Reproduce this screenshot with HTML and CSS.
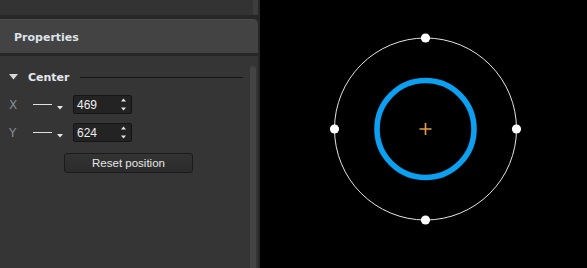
FILE: index.html
```html
<!DOCTYPE html>
<html>
<head>
<meta charset="utf-8">
<link rel="stylesheet" href="styles.css">
</head>
<body>
<div class="app">
  <aside class="sidebar">
    <div class="top-panel">
      <div class="top-fill"></div>
      <div class="top-thumb"></div>
    </div>
    <div class="panel-header">Properties</div>
    <div class="panel-body">
      <div class="panel-main">
        <div class="section-head">
          <svg class="caret" width="9" height="6" viewBox="0 0 9 6"><path d="M0 0H9L4.5 5.5Z" fill="#d6d6d6"/></svg>
          <span class="section-title">Center</span>
          <span class="section-rule"></span>
        </div>
        <div class="field-row">
          <span class="axis">X</span>
          <span class="curve-pick">
            <span class="curve-line"></span>
            <svg class="mini-caret" width="6" height="4" viewBox="0 0 6 4"><path d="M0 0H6L3 3.5Z" fill="#e6e6e6"/></svg>
          </span>
          <div class="spin">
            <span class="spin-value">469</span>
            <span class="spin-arrows">
              <svg width="5" height="13" viewBox="0 0 5 13"><path d="M0 3.5H5L2.5 0.5Z M0 9.5H5L2.5 12.5Z" fill="#e6e6e6"/></svg>
            </span>
          </div>
        </div>
        <div class="field-row second">
          <span class="axis">Y</span>
          <span class="curve-pick">
            <span class="curve-line"></span>
            <svg class="mini-caret" width="6" height="4" viewBox="0 0 6 4"><path d="M0 0H6L3 3.5Z" fill="#e6e6e6"/></svg>
          </span>
          <div class="spin">
            <span class="spin-value">624</span>
            <span class="spin-arrows">
              <svg width="5" height="13" viewBox="0 0 5 13"><path d="M0 3.5H5L2.5 0.5Z M0 9.5H5L2.5 12.5Z" fill="#e6e6e6"/></svg>
            </span>
          </div>
        </div>
        <button class="reset-btn">Reset position</button>
      </div>
      <div class="scroll-track"><div class="scroll-thumb"></div></div>
    </div>
  </aside>
  <main class="canvas">
    <svg width="327" height="268" viewBox="0 0 327 268">
      <defs>
        <filter id="soft" x="-20%" y="-20%" width="140%" height="140%">
          <feGaussianBlur stdDeviation="0.7"/>
        </filter>
      </defs>
      <circle cx="165.5" cy="129" r="91" fill="none" stroke="#e4e4e4" stroke-width="1"/>
      <circle cx="165.5" cy="129" r="48.5" fill="none" stroke="#079ff0" stroke-width="5.6" filter="url(#soft)"/>
      <path d="M159.5 129H171.5M165.5 123V135" stroke="#e59f45" stroke-width="1.6"/>
      <circle cx="165.5" cy="38" r="4.6" fill="#ffffff"/>
      <circle cx="165.5" cy="220" r="4.6" fill="#ffffff"/>
      <circle cx="74.5" cy="129" r="4.6" fill="#ffffff"/>
      <circle cx="256.5" cy="129" r="4.6" fill="#ffffff"/>
    </svg>
  </main>
</div>
</body>
</html>
```
FILE: styles.css
```css
html, body {
  margin: 0;
  padding: 0;
  background: #000;
}
.app {
  display: flex;
  width: 587px;
  height: 268px;
  overflow: hidden;
}
.sidebar {
  width: 260px;
  flex: none;
  background: #272727;
  display: flex;
  flex-direction: column;
}
.top-panel {
  flex: none;
  width: 258px;
  height: 15px;
  background: #333333;
  display: flex;
}
.top-fill { flex: 1; }
.top-thumb {
  width: 5px;
  background: #3d3d3d;
  border-radius: 0 0 3px 3px;
}
.panel-header {
  flex: none;
  margin-top: 4px;
  width: 258px;
  height: 34px;
  box-sizing: border-box;
  background: #434343;
  border-top: 1px solid #4d4d4d;
  border-radius: 0 5px 0 0;
  padding-left: 14px;
  padding-top: 1px;
  font-family: "DejaVu Sans", Verdana, sans-serif;
  font-weight: bold;
  font-size: 11px;
  line-height: 33px;
  color: #dde2e8;
}
.panel-body {
  margin-top: 3px;
  width: 258px;
  flex: 1;
  min-height: 0;
  background: #353535;
  display: flex;
}
.panel-main {
  flex: 1;
  display: flex;
  flex-direction: column;
  padding: 14px 0 0 9px;
}
.scroll-track {
  width: 8px;
  flex: none;
  display: flex;
  flex-direction: column;
}
.scroll-thumb {
  margin-top: 10px;
  width: 6px;
  flex: 1;
  background: #444444;
  border-radius: 3px 3px 0 0;
}
.section-head {
  display: flex;
  align-items: center;
  height: 14px;
}
.caret { display: block; }
.section-title {
  margin-left: 10px;
  font-family: "DejaVu Sans", Verdana, sans-serif;
  font-weight: bold;
  font-size: 11px;
  color: #e4e8ee;
}
.section-rule {
  margin-left: 10px;
  width: 163px;
  height: 1px;
  background: #161616;
}
.field-row {
  display: flex;
  align-items: center;
  height: 19px;
  margin-top: 11px;
}
.field-row.second { margin-top: 9px; }
.axis {
  width: 24px;
  font-family: "DejaVu Sans", Verdana, sans-serif;
  font-size: 12px;
  color: #858d98;
}
.curve-pick {
  display: flex;
  align-items: center;
  width: 40px;
}
.curve-line {
  width: 19px;
  height: 1px;
  background: #e0e0e0;
}
.mini-caret {
  margin-left: 5px;
  margin-top: 6px;
}
.spin {
  width: 59px;
  height: 19px;
  box-sizing: border-box;
  background: #232323;
  border: 1px solid #151515;
  border-radius: 2px;
  display: flex;
  align-items: center;
  padding-left: 3px;
  padding-right: 5px;
}
.spin-value {
  flex: 1;
  font-family: "Liberation Sans", Arial, sans-serif;
  font-size: 12px;
  color: #eeeeee;
}
.spin-arrows svg { display: block; }
.reset-btn {
  margin-top: 11px;
  margin-left: 55px;
  width: 129px;
  height: 20px;
  box-sizing: border-box;
  background: linear-gradient(#333333, #2b2b2b);
  border: 1px solid #1b1b1b;
  border-radius: 3px;
  font-family: "Liberation Sans", Arial, sans-serif;
  font-size: 11.5px;
  color: #e6e6e6;
  padding: 0;
}
.canvas {
  flex: 1;
  background: #000;
}
.canvas svg { display: block; }
```
